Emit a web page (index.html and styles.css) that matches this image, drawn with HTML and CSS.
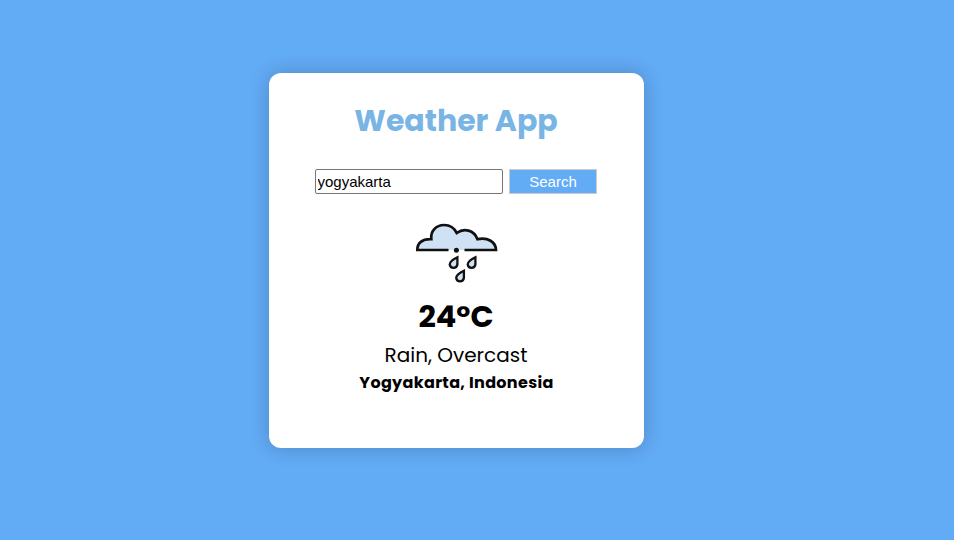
FILE: index.html
```html
<!DOCTYPE html>
<html lang="en">
<head>
<meta charset="utf-8">
<title>Weather App</title>
<link rel="stylesheet" href="styles.css">
</head>
<body>
<main class="card">
  <h1 class="title">Weather App</h1>
  <form class="search">
    <input class="search-input" type="text" value="yogyakarta" spellcheck="false" aria-label="City">
    <button class="search-button" type="button">Search</button>
  </form>
  <svg class="icon" viewBox="0 0 110 85" aria-hidden="true">
    <path fill="#cfe2f3" d="M17 40C17 33 22 28.5 31 29C30 21 36 14.8 44 14.8C50 14.8 54.5 18 56.7 23C64 17.5 74 19.5 77.5 29C88 26.5 96 32 96.3 40Z"/>
    <g fill="none" stroke="#111" stroke-width="2.7">
      <path d="M48.5 40H17.3C17.3 33 22 28.8 31.3 29.2C30.3 21.5 36 15 44 15C50 15 54.5 18.3 56.7 23C64 17.5 74 20 77.5 29.2C88 27 95.7 32 96 40H64.5"/>
      <g fill="#cfe2f3" stroke-width="2.3">
        <path id="drop" d="M57.4 47.2C52.5 49.5 49.7 51.6 49.7 54.5A3.9 3.9 0 0 0 57.4 54.5Z"/>
        <use href="#drop" x="18"/>
        <use href="#drop" x="6.5" y="13.5"/>
      </g>
    </g>
    <circle cx="56.4" cy="40.2" r="2.5" fill="#111"/>
  </svg>
  <p class="temperature">24°C</p>
  <p class="description">Rain, Overcast</p>
  <p class="location">Yogyakarta, Indonesia</p>
</main>
</body>
</html>
```
FILE: styles.css
```css
* {
  box-sizing: border-box;
}

body {
  margin: 0;
  height: 540px;
  padding: 73px 0 0 269px;
  overflow: hidden;
  background: #62abf5;
  font-family: Poppins, Inter, sans-serif;
  color: #000;
}

.card {
  display: flex;
  flex-direction: column;
  align-items: center;
  width: 375px;
  height: 375px;
  padding-top: 24px;
  border-radius: 12px;
  background: #fff;
  box-shadow: 0 0 20px rgba(0, 0, 0, 0.2);
}

.title,
.temperature,
.description,
.location {
  margin: 0;
  white-space: nowrap;
}

.title {
  height: 72px;
  margin-right: 1px;
  font-size: 30px;
  line-height: 47px;
  color: #78b4e4;
}

.search {
  display: flex;
  gap: 6px;
  height: 25px;
  margin-right: 1px;
}

.search-input {
  width: 188px;
  padding: 1px 1.5px;
  border: 1px solid #767676;
  border-radius: 2px;
  font: 15px "Liberation Sans", sans-serif;
}

.search-button {
  width: 88px;
  padding: 0;
  border: 1px solid #ccc;
  background: #62abf5;
  color: #fff;
  font: 15px "Liberation Sans", sans-serif;
}

.icon {
  width: 110px;
  height: 85px;
  margin: 16px 3px 0 0;
}

.temperature {
  height: 45px;
  margin-right: 1px;
  font-size: 30.4px;
  font-weight: 700;
  line-height: 44px;
}

.description {
  margin-right: 1px;
  font-size: 20px;
  line-height: 30px;
}

.location {
  font-size: 16px;
  font-weight: 700;
  letter-spacing: 0.33px;
  line-height: 26px;
}
```
